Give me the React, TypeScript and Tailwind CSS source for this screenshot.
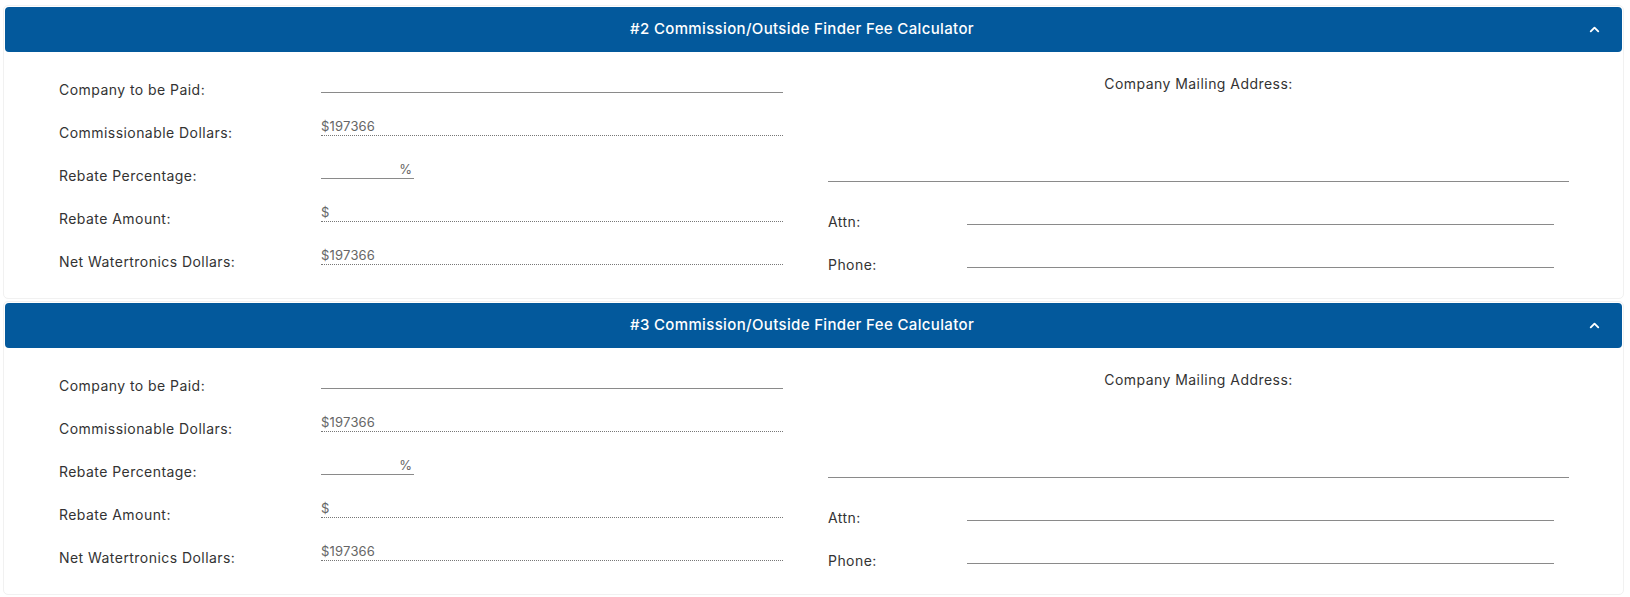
import { ChevronUp } from "lucide-react";

const font = { fontFamily: "Inter, 'Noto Sans', sans-serif" };

function ValueRow({
  label,
  children,
}: {
  label: string;
  children: React.ReactNode;
}) {
  return (
    <div className="flex items-center h-[43px]">
      <div className="w-[262px] text-[14px] tracking-[0.45px] text-[#333]">
        {label}
      </div>
      {children}
    </div>
  );
}

function Calculator({ n }: { n: number }) {
  return (
    <div className="border border-[#f1f1f1] rounded-[5px] p-[1px] bg-white">
      {/* Header */}
      <div className="flex items-center h-[45px] px-4 rounded-[4px] bg-[#03599c] text-white">
        <div className="flex-1 text-center text-[15px] font-medium tracking-[0.35px]">
          #{n} Commission/Outside Finder Fee Calculator
        </div>
        <div className="w-[23px] flex justify-center">
          <ChevronUp size={15} strokeWidth={3} />
        </div>
      </div>

      {/* Body */}
      <div className="flex h-[245px]">
        {/* Left side */}
        <div className="w-[823px] pl-[54px] pt-[16px]">
          <ValueRow label="Company to be Paid:">
            <div className="w-[462px] h-[20px] mb-[14px] border-b border-[#8a8a8a]" />
          </ValueRow>
          <ValueRow label="Commissionable Dollars:">
            <div className="w-[462px] h-[20px] mb-[14px] leading-[20px] border-b border-dotted border-[#777] text-[13px] tracking-[0.2px] text-[#666]">
              $197366
            </div>
          </ValueRow>
          <ValueRow label="Rebate Percentage:">
            <div className="w-[93px] h-[20px] mb-[14px] leading-[20px] border-b border-[#8a8a8a] text-[13px] text-[#666] text-right pr-[2px]">
              %
            </div>
          </ValueRow>
          <ValueRow label="Rebate Amount:">
            <div className="w-[462px] h-[20px] mb-[14px] leading-[20px] border-b border-dotted border-[#777] text-[13px] text-[#666]">
              $
            </div>
          </ValueRow>
          <ValueRow label="Net Watertronics Dollars:">
            <div className="w-[462px] h-[20px] mb-[14px] leading-[20px] border-b border-dotted border-[#777] text-[13px] tracking-[0.2px] text-[#666]">
              $197366
            </div>
          </ValueRow>
        </div>

        {/* Right side */}
        <div className="w-[741px] flex flex-col">
          <div className="mt-[22px] h-[20px] leading-[20px] text-center text-[14px] tracking-[0.45px] text-[#333]">
            Company Mailing Address:
          </div>
          <div className="h-[88px] border-b border-[#8a8a8a]" />
          <div className="mt-[17px] flex items-center h-[43px] pr-[15px]">
            <div className="w-[139px] pt-[2px] text-[14px] tracking-[0.45px] text-[#333]">
              Attn:
            </div>
            <div className="flex-1 h-px mt-[8px] bg-[#8a8a8a]" />
          </div>
          <div className="flex items-center h-[43px] pr-[15px]">
            <div className="w-[139px] pt-[1px] text-[14px] tracking-[0.45px] text-[#333]">
              Phone:
            </div>
            <div className="flex-1 h-px mt-[8px] bg-[#8a8a8a]" />
          </div>
        </div>
      </div>
    </div>
  );
}

export default function App() {
  return (
    <div className="min-h-screen bg-white pt-[5px] pl-[3px] pr-[6px]" style={font}>
      <div className="flex flex-col gap-[2px]">
        <Calculator n={2} />
        <Calculator n={3} />
      </div>
    </div>
  );
}
